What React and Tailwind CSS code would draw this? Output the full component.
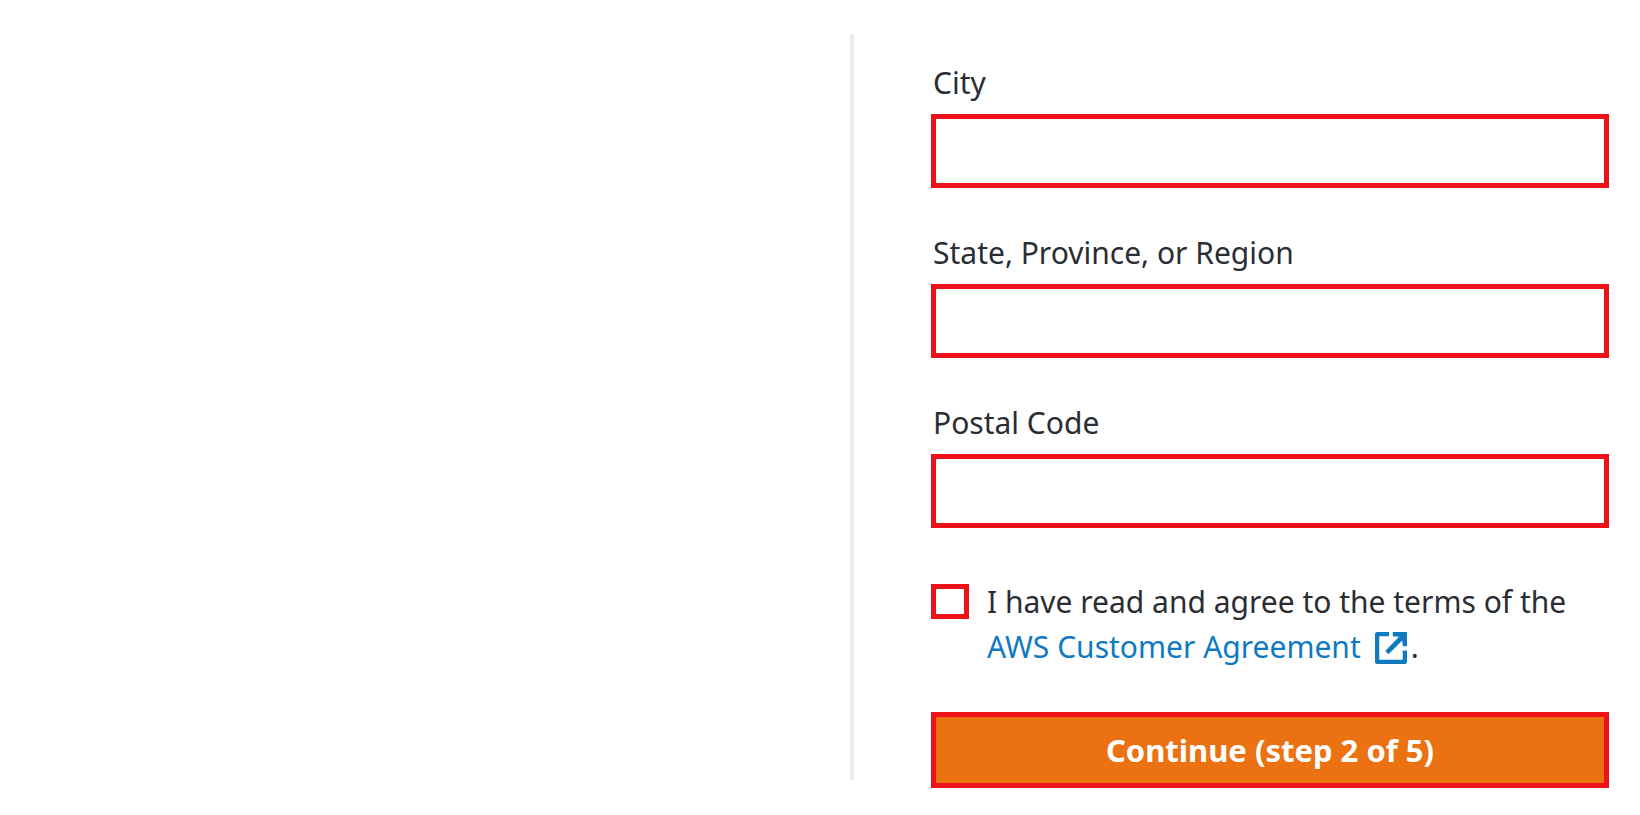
import React from "react";

const fields = [
  { id: "city", label: "City" },
  { id: "state", label: "State, Province, or Region" },
  { id: "postal", label: "Postal Code" },
];

function ExternalIcon() {
  return (
    <svg
      className="ml-[14px] mr-1 inline-block h-8 w-8 align-[-6px]"
      viewBox="0 0 32 32"
      aria-hidden="true"
    >
      <path
        d="M14 2H3.500Q2 2 2 3.500V28.500Q2 30 3.500 30H28.500Q30 30 30 28.500V18.500"
        fill="none"
        stroke="currentColor"
        strokeWidth="4.500"
      />
      <path
        d="M18 0H32V14H28L27.500 8L13.500 22L10.500 19L24.500 4.500L18 4Z"
        fill="currentColor"
        stroke="currentColor"
        strokeWidth="0.500"
      />
    </svg>
  );
}

export default function App() {
  return (
    <main className="grid grid-cols-[850fr_790fr] bg-white pt-[34px] font-['Noto_Sans',sans-serif] text-[30px] text-[#2a2e34]">
      <div />
      <div className="flex">
        <div className="mb-2 w-1 shrink-0 bg-[#e8eded]" />
        <form
          className="flex flex-1 flex-col pl-[77px] pr-[31px] pt-[29px]"
          onSubmit={(e) => e.preventDefault()}
        >
          <div className="flex flex-col gap-[45px]">
            {fields.map((f) => (
              <div key={f.id} className="flex flex-col gap-[11px]">
                <label htmlFor={f.id} className="pl-[2px] leading-[40px]">
                  {f.label}
                </label>
                <input
                  id={f.id}
                  type="text"
                  className="h-[74px] w-full border-[5px] border-[#ee1119] bg-white px-4 outline-none"
                />
              </div>
            ))}
          </div>
          <div className="mt-[51px] flex gap-[18px]">
            <input
              id="agree"
              type="checkbox"
              className="mt-[5px] h-[35px] w-[38px] shrink-0 appearance-none border-[5px] border-[#ee1119] bg-white"
            />
            <label htmlFor="agree" className="leading-[45px]">
              I have read and agree to the terms of the{" "}
              <a href="#agreement" className="whitespace-nowrap text-[#0f7ac0]">
                AWS Customer Agreement
                <ExternalIcon />
              </a>
              .
            </label>
          </div>
          <button
            type="submit"
            className="mt-[43px] h-[76px] w-full border-[5px] border-[#ee1119] bg-[#ec7211] text-[31px] font-bold text-white"
          >
            Continue (step 2 of 5)
          </button>
        </form>
      </div>
    </main>
  );
}
